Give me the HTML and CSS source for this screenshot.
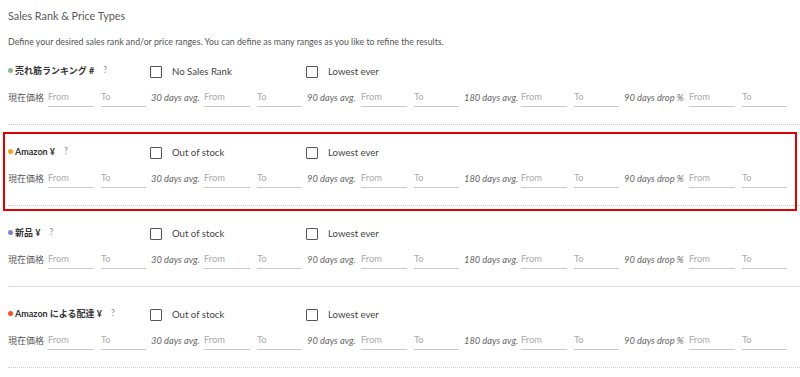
FILE: index.html
```html
<!DOCTYPE html>
<html lang="ja">
<head>
  <meta charset="UTF-8" />
  <meta name="viewport" content="width=device-width, initial-scale=1.0"/>
  <title>Sales Rank &amp; Price Types</title>
  <link rel="stylesheet" href="styles.css">
</head>
<body>
  <div class="page">
    <h2 class="page-title">Sales Rank &amp; Price Types</h2>
    <p class="page-desc">Define your desired sales rank and/or price ranges. You can define as many ranges as you like to refine the results.</p>

    <div class="sections">
      <div class="section">
        <div class="sec-head">
          <div class="sec-title"><span class="dot dot-rank"></span><b>売れ筋ランキング #</b><span class="help">?</span></div>
          <label class="opt"><input type="checkbox"><span>No Sales Rank</span></label>
          <label class="opt"><input type="checkbox"><span>Lowest ever</span></label>
        </div>
        <div class="range-row">
          <span class="lbl lbl-now">現在価格</span>
          <input class="from" placeholder="From"><input class="to" placeholder="To">
          <span class="lbl lbl-30">30 days avg.</span>
          <input class="from" placeholder="From"><input class="to" placeholder="To">
          <span class="lbl lbl-90">90 days avg.</span>
          <input class="from" placeholder="From"><input class="to" placeholder="To">
          <span class="lbl lbl-180">180 days avg.</span>
          <input class="from" placeholder="From"><input class="to" placeholder="To">
          <span class="lbl lbl-drop">90 days drop %</span>
          <input class="from" placeholder="From"><input class="to" placeholder="To">
        </div>
      </div>

      <div class="section highlight">
        <div class="sec-head">
          <div class="sec-title"><span class="dot dot-amazon"></span><b>Amazon ¥</b><span class="help">?</span></div>
          <label class="opt"><input type="checkbox"><span>Out of stock</span></label>
          <label class="opt"><input type="checkbox"><span>Lowest ever</span></label>
        </div>
        <div class="range-row">
          <span class="lbl lbl-now">現在価格</span>
          <input class="from" placeholder="From"><input class="to" placeholder="To">
          <span class="lbl lbl-30">30 days avg.</span>
          <input class="from" placeholder="From"><input class="to" placeholder="To">
          <span class="lbl lbl-90">90 days avg.</span>
          <input class="from" placeholder="From"><input class="to" placeholder="To">
          <span class="lbl lbl-180">180 days avg.</span>
          <input class="from" placeholder="From"><input class="to" placeholder="To">
          <span class="lbl lbl-drop">90 days drop %</span>
          <input class="from" placeholder="From"><input class="to" placeholder="To">
        </div>
      </div>

      <div class="section">
        <div class="sec-head">
          <div class="sec-title"><span class="dot dot-new"></span><b>新品 ¥</b><span class="help">?</span></div>
          <label class="opt"><input type="checkbox"><span>Out of stock</span></label>
          <label class="opt"><input type="checkbox"><span>Lowest ever</span></label>
        </div>
        <div class="range-row">
          <span class="lbl lbl-now">現在価格</span>
          <input class="from" placeholder="From"><input class="to" placeholder="To">
          <span class="lbl lbl-30">30 days avg.</span>
          <input class="from" placeholder="From"><input class="to" placeholder="To">
          <span class="lbl lbl-90">90 days avg.</span>
          <input class="from" placeholder="From"><input class="to" placeholder="To">
          <span class="lbl lbl-180">180 days avg.</span>
          <input class="from" placeholder="From"><input class="to" placeholder="To">
          <span class="lbl lbl-drop">90 days drop %</span>
          <input class="from" placeholder="From"><input class="to" placeholder="To">
        </div>
      </div>

      <div class="section">
        <div class="sec-head">
          <div class="sec-title"><span class="dot dot-fba"></span><b>Amazon による配達 ¥</b><span class="help">?</span></div>
          <label class="opt"><input type="checkbox"><span>Out of stock</span></label>
          <label class="opt"><input type="checkbox"><span>Lowest ever</span></label>
        </div>
        <div class="range-row">
          <span class="lbl lbl-now">現在価格</span>
          <input class="from" placeholder="From"><input class="to" placeholder="To">
          <span class="lbl lbl-30">30 days avg.</span>
          <input class="from" placeholder="From"><input class="to" placeholder="To">
          <span class="lbl lbl-90">90 days avg.</span>
          <input class="from" placeholder="From"><input class="to" placeholder="To">
          <span class="lbl lbl-180">180 days avg.</span>
          <input class="from" placeholder="From"><input class="to" placeholder="To">
          <span class="lbl lbl-drop">90 days drop %</span>
          <input class="from" placeholder="From"><input class="to" placeholder="To">
        </div>
      </div>
    </div>
  </div>
</body>
</html>
```

FILE: styles.css
```css
/* Base */
body {
  margin: 0;
  font-family: Lato, "Noto Sans CJK JP", sans-serif;
  color: #555;
  background: #fff;
  overflow: hidden;
}

.page {
  padding: 7px 0 0 8px;
}

.page-title {
  margin: 0 0 10px;
  font-size: 10.8px;
  line-height: 18px;
  font-weight: normal;
  color: #5a5a5a;
}

.page-desc {
  margin: 0;
  font-size: 8.8px;
  line-height: 14px;
  color: #555;
}

/* Sections */
.section {
  position: relative;
  padding: 18px 0 17px;
  border-bottom: 1px dotted #ccc;
}

.section:first-child {
  padding-top: 13px;
}

/* red highlight box */
.highlight:before {
  content: "";
  position: absolute;
  top: 7px;
  bottom: -6px;
  left: -5px;
  right: 3px;
  border: 2px solid #e00000;
  pointer-events: none;
}

.sec-head {
  display: flex;
  align-items: center;
  height: 16px;
}

.sec-title {
  width: 142px;
  display: flex;
  align-items: center;
  font-size: 9px;
  color: #333;
}

.sec-title b {
  font-weight: bold;
}

.dot {
  width: 5px;
  height: 5px;
  border-radius: 50%;
  margin-right: 2px;
}

.dot-rank { background: #8db88d; }
.dot-amazon { background: #f7a21d; }
.dot-new { background: #7f84d6; }
.dot-fba { background: #f2521f; }

.help {
  margin-left: 9px;
  color: #888;
  font-size: 8.5px;
}

.opt {
  width: 156px;
  display: flex;
  align-items: center;
  gap: 10px;
  font-size: 9.6px;
  color: #444;
  margin-top: 3px;
}

.opt input {
  appearance: none;
  -webkit-appearance: none;
  margin: 0;
  width: 12px;
  height: 12px;
  border: 1.5px solid #555;
  border-radius: 1px;
  background: #fff;
}

/* Range inputs */
.range-row {
  display: flex;
  align-items: center;
  margin-top: 9px;
  font-size: 9.3px;
}

.lbl {
  color: #666;
  white-space: nowrap;
}

.lbl-now { width: 40px; color: #555; font-size: 9px; }
.lbl-30 { width: 53px; font-style: italic; }
.lbl-90 { width: 54px; font-style: italic; }
.lbl-180 { width: 57px; font-style: italic; }
.lbl-drop { width: 65px; font-style: italic; }

.range-row input {
  box-sizing: border-box;
  width: 46px;
  height: 20px;
  padding: 0;
  border: none;
  border-bottom: 1px solid #c8c8c8;
  background: transparent;
  font: inherit;
  color: #555;
  outline: none;
}

.range-row input::placeholder {
  color: #aaa;
}

.range-row .from {
  margin-right: 7px;
}

.range-row .to {
  width: 45px;
  margin-right: 5px;
}
```
